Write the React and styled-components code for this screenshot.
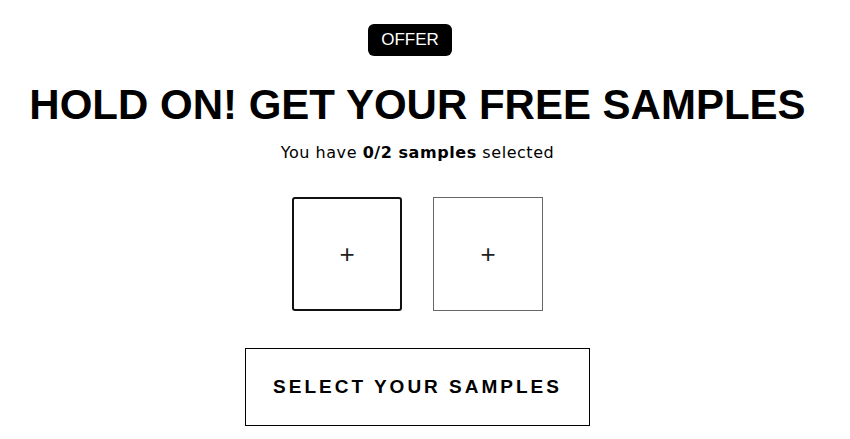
import styled, { createGlobalStyle } from "styled-components";

const Global = createGlobalStyle`
    body{
        margin: 0;
        background: #ffffff;
        overflow: hidden;
        font-family: "Liberation Sans", Arial, sans-serif;
        color: #000000;
    }
`

export default function App(){
    return<>
        <Global />
        <Page>
            <Badge>OFFER</Badge>
            <Title>HOLD ON! GET YOUR FREE SAMPLES</Title>
            <Subtitle>You have <b>0/2 samples</b> selected</Subtitle>
            <Slots>
                <Slot active>+</Slot>
                <Slot>+</Slot>
            </Slots>
            <SelectButton>SELECT YOUR SAMPLES</SelectButton>
        </Page>
    </>
}

const Page = styled.div`
    width: 835px;
    display: flex;
    flex-direction: column;
    align-items: center;
    padding-top: 24px;
`

const Badge = styled.div`
    background-color: #000000;
    color: #ffffff;
    border-radius: 6px;
    height: 32px;
    padding: 0 13px;
    display: flex;
    align-items: center;
    font-size: 17px;
    margin-right: 15px;
`

const Title = styled.h1`
    margin: 24px 0 0 0;
    font-size: 42px;
    font-weight: 700;
    line-height: 50px;
    white-space: nowrap;
`

const Subtitle = styled.p`
    margin: 12px 0 0 0;
    font-family: "DejaVu Sans", sans-serif;
    font-size: 16px;
    line-height: 22px;
    letter-spacing: 0.55px;
    b{
        font-weight: 700;
    }
`

const Slots = styled.div`
    display: flex;
    gap: 31px;
    margin-top: 33px;
`

const Slot = styled.div`
    box-sizing: border-box;
    width: 110px;
    height: 114px;
    border: ${p => p.active ? "2px solid #111111" : "1px solid #666666"};
    border-radius: ${p => p.active ? "3px" : "0"};
    display: flex;
    align-items: center;
    justify-content: center;
    font-size: 26px;
    font-weight: 300;
    color: #222222;
`

const SelectButton = styled.button`
    box-sizing: border-box;
    margin-top: 37px;
    width: 345px;
    height: 78px;
    background: #ffffff;
    border: 1px solid #000000;
    font-family: "Liberation Sans", Arial, sans-serif;
    font-size: 19px;
    font-weight: 700;
    letter-spacing: 3px;
    color: #000000;
    cursor: pointer;
`
